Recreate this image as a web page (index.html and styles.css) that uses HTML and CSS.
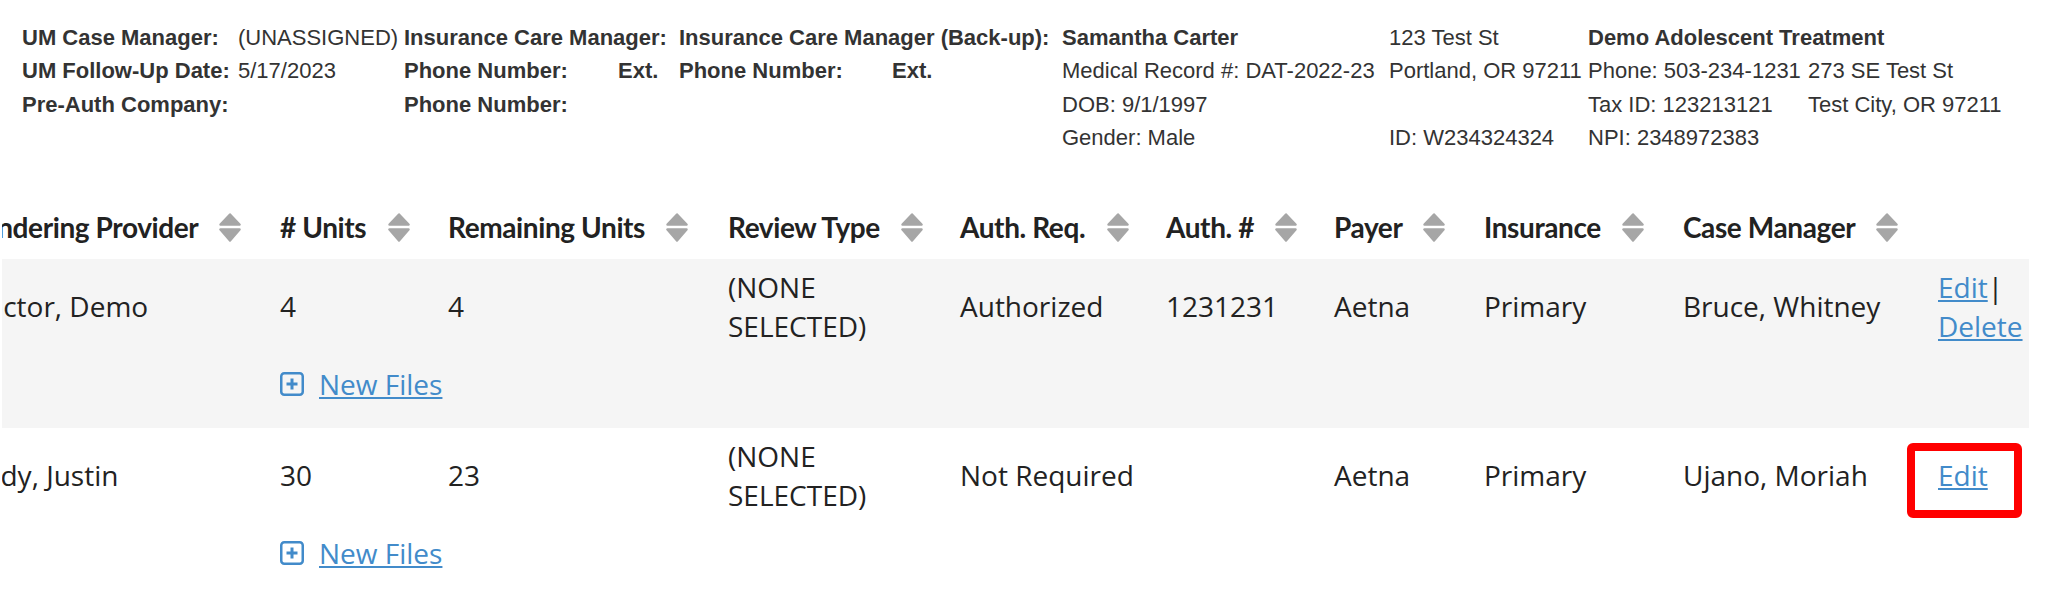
FILE: index.html
```html
<!DOCTYPE html>
<html lang="en">
<head>
  <meta charset="UTF-8">
  <title>Authorizations</title>
  <link rel="stylesheet" href="styles.css">
</head>
<body>

  <div class="case-info">
    <div class="info-group um">
      <span class="label">UM Case Manager:</span><span>(UNASSIGNED)</span>
      <span class="label">UM Follow-Up Date:</span><span>5/17/2023</span>
      <span class="label">Pre-Auth Company:</span><span></span>
    </div>
    <div class="info-group ins">
      <span class="label span2">Insurance Care Manager:</span>
      <span class="label span2">Insurance Care Manager (Back-up):</span>
      <span class="label">Phone Number:</span><span class="label">Ext.</span>
      <span class="label">Phone Number:</span><span class="label">Ext.</span>
      <span class="label">Phone Number:</span>
    </div>
    <div class="info-group patient">
      <span class="label">Samantha Carter</span><span>123 Test St</span>
      <span>Medical Record #: DAT-2022-23</span><span>Portland, OR 97211</span>
      <span>DOB: 9/1/1997</span><span></span>
      <span>Gender: Male</span><span>ID: W234324324</span>
    </div>
    <div class="info-group facility">
      <span class="label span2">Demo Adolescent Treatment</span>
      <span>Phone: 503-234-1231</span><span>273 SE Test St</span>
      <span>Tax ID: 123213121</span><span>Test City, OR 97211</span>
      <span>NPI: 2348972383</span>
    </div>
  </div>

  <div class="grid-wrap">
    <table class="auth-grid">
      <colgroup>
        <col class="c-provider">
        <col class="c-units">
        <col class="c-remaining">
        <col class="c-review">
        <col class="c-req">
        <col class="c-authno">
        <col class="c-payer">
        <col class="c-insurance">
        <col class="c-manager">
        <col class="c-actions">
      </colgroup>
      <thead>
        <tr>
          <th>Rendering Provider <svg class="sort" viewBox="0 0 22 29"><polygon points="11,1.5 20.5,11.5 1.5,11.5"/><polygon points="1.5,16.5 20.5,16.5 11,27.5"/></svg></th>
          <th># Units <svg class="sort" viewBox="0 0 22 29"><polygon points="11,1.5 20.5,11.5 1.5,11.5"/><polygon points="1.5,16.5 20.5,16.5 11,27.5"/></svg></th>
          <th>Remaining Units <svg class="sort" viewBox="0 0 22 29"><polygon points="11,1.5 20.5,11.5 1.5,11.5"/><polygon points="1.5,16.5 20.5,16.5 11,27.5"/></svg></th>
          <th>Review Type <svg class="sort" viewBox="0 0 22 29"><polygon points="11,1.5 20.5,11.5 1.5,11.5"/><polygon points="1.5,16.5 20.5,16.5 11,27.5"/></svg></th>
          <th>Auth. Req. <svg class="sort" viewBox="0 0 22 29"><polygon points="11,1.5 20.5,11.5 1.5,11.5"/><polygon points="1.5,16.5 20.5,16.5 11,27.5"/></svg></th>
          <th>Auth. # <svg class="sort" viewBox="0 0 22 29"><polygon points="11,1.5 20.5,11.5 1.5,11.5"/><polygon points="1.5,16.5 20.5,16.5 11,27.5"/></svg></th>
          <th>Payer <svg class="sort" viewBox="0 0 22 29"><polygon points="11,1.5 20.5,11.5 1.5,11.5"/><polygon points="1.5,16.5 20.5,16.5 11,27.5"/></svg></th>
          <th>Insurance <svg class="sort" viewBox="0 0 22 29"><polygon points="11,1.5 20.5,11.5 1.5,11.5"/><polygon points="1.5,16.5 20.5,16.5 11,27.5"/></svg></th>
          <th>Case Manager <svg class="sort" viewBox="0 0 22 29"><polygon points="11,1.5 20.5,11.5 1.5,11.5"/><polygon points="1.5,16.5 20.5,16.5 11,27.5"/></svg></th>
          <th></th>
        </tr>
      </thead>
      <tbody>
        <tr class="odd">
          <td>Doctor, Demo</td>
          <td>4</td>
          <td>4</td>
          <td>(NONE SELECTED)</td>
          <td>Authorized</td>
          <td>1231231</td>
          <td>Aetna</td>
          <td>Primary</td>
          <td>Bruce, Whitney</td>
          <td class="actions"><a href="#">Edit</a>| <a href="#">Delete</a></td>
        </tr>
        <tr class="odd files-row">
          <td></td>
          <td colspan="9">
            <div class="files">
              <svg class="plus" viewBox="0 0 24 24"><rect x="1.25" y="1.25" width="21.5" height="21.5" rx="3"/><path d="M12 6.5v11M6.5 12h11"/></svg>
              <a href="#">New Files</a>
            </div>
          </td>
        </tr>
        <tr>
          <td>Cody, Justin</td>
          <td>30</td>
          <td>23</td>
          <td>(NONE SELECTED)</td>
          <td>Not Required</td>
          <td></td>
          <td>Aetna</td>
          <td>Primary</td>
          <td>Ujano, Moriah</td>
          <td class="actions"><a href="#">Edit</a><span class="highlight"></span></td>
        </tr>
        <tr class="files-row">
          <td></td>
          <td colspan="9">
            <div class="files">
              <svg class="plus" viewBox="0 0 24 24"><rect x="1.25" y="1.25" width="21.5" height="21.5" rx="3"/><path d="M12 6.5v11M6.5 12h11"/></svg>
              <a href="#">New Files</a>
            </div>
          </td>
        </tr>
      </tbody>
    </table>
  </div>

</body>
</html>
```

FILE: styles.css
```css
body {
  margin: 0;
  background: #fff;
  color: #222;
}
.case-info {
  display: flex;
  padding: 21px 0 0 22px;
  font-family: "Liberation Sans", Arial, sans-serif;
  font-size: 22px;
  line-height: 33.4px;
  color: #333;
  white-space: nowrap;
}
.info-group {
  display: grid;
  align-content: start;
}
.um {
  grid-template-columns: 216px 166px;
}
.ins {
  grid-template-columns: 214px 61px 213px 170px;
}
.patient {
  grid-template-columns: 327px 199px;
}
.facility {
  grid-template-columns: 220px auto;
}
.span2 {
  grid-column: span 2;
}
.label {
  font-weight: bold;
}

.grid-wrap {
  margin: 42px 0 0 2px;
  overflow: hidden;
}
.auth-grid {
  table-layout: fixed;
  border-collapse: collapse;
  width: 2081px;
  margin-left: -54px;
  font-family: "Open Sans", sans-serif;
  font-size: 28px;
}
.c-provider { width: 314px; }
.c-units { width: 168px; }
.c-remaining { width: 280px; }
.c-review { width: 232px; }
.c-req { width: 206px; }
.c-authno { width: 168px; }
.c-payer { width: 150px; }
.c-insurance { width: 199px; }
.c-manager { width: 255px; }
.c-actions { width: 109px; }

.auth-grid th {
  font-family: Lato, sans-serif;
  font-weight: 700;
  letter-spacing: -0.4px;
  text-align: left;
  line-height: 34px;
  padding: 13px 19px 15px 18px;
  white-space: nowrap;
  color: #222;
}
.sort {
  width: 22px;
  height: 29px;
  margin-left: 15px;
  vertical-align: -4px;
  fill: #a6a6a6;
  stroke: #a6a6a6;
  stroke-width: 2.5;
  stroke-linejoin: round;
}
.auth-grid td {
  line-height: 39px;
  padding: 9px 4px 9px 18px;
  vertical-align: middle;
}
.auth-grid .odd {
  background: #f5f5f5;
}
.auth-grid .files-row td {
  padding: 10px 4px 24px 18px;
}
.files {
  display: flex;
  align-items: center;
  gap: 15px;
  white-space: nowrap;
}
.plus {
  width: 24px;
  height: 24px;
  fill: none;
  stroke: #428bca;
  stroke-width: 2.5;
}
.plus path {
  stroke-width: 3;
}
a {
  color: #428bca;
  text-decoration: underline;
}
.actions {
  position: relative;
}
.highlight {
  position: absolute;
  left: -13px;
  top: 15px;
  width: 99px;
  height: 59px;
  border: 8px solid #f00;
  border-radius: 6px;
}
```
